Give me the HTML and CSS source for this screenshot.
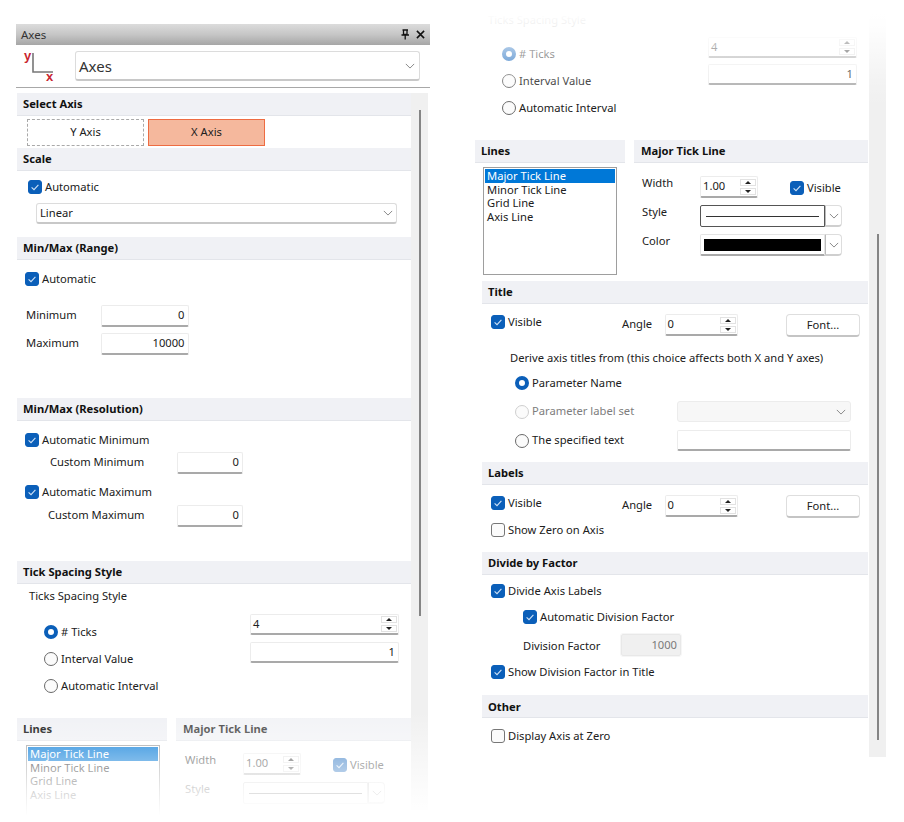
FILE: index.html
```html
<!DOCTYPE html>
<html lang="en">
<head>
<meta charset="utf-8">
<title>Axes</title>
<link rel="stylesheet" href="styles.css">
</head>
<body>
<svg class="defs" aria-hidden="true">
  <symbol id="tick" viewBox="0 0 14 14"><path d="M3.6 7.3 6 9.6 10.4 4.8" fill="none" stroke="#cfe2f7" stroke-width="1.1"/></symbol>
  <symbol id="chev" viewBox="0 0 12 7"><path d="M1 1 6 6 11 1" fill="none" stroke="#8a8a8a" stroke-width="1.2"/></symbol>
</svg>
<main class="page">
  <section class="panel panel-left">
    <header class="titlebar">
      <span>Axes</span>
      <span class="title-icons">
        <svg class="pin" viewBox="0 0 10 11"><path d="M2.5 1H8M3.5 1V5.5H7V1M1.5 6H9M5.2 6V10.5" fill="none" stroke="#111" stroke-width="1.3"/></svg>
        <svg class="close" viewBox="0 0 10 10"><path d="M1 1 9 9M9 1 1 9" fill="none" stroke="#111" stroke-width="1.7"/></svg>
      </span>
    </header>
    <div class="pickrow">
      <svg class="axes-icon" viewBox="0 -6 36 42">
        <path d="M10 2V21H30" fill="none" stroke="#777" stroke-width="1.6"/>
        <text class="axes-letter" x="1" y="9">y</text>
        <text class="axes-letter" x="23" y="30">x</text>
      </svg>
      <div class="combo combo-main"><span>Axes</span><svg class="chev"><use href="#chev"/></svg></div>
    </div>
    <div class="scrollarea">
      <div class="content">
        <h2 class="head">Select Axis</h2>
        <div class="axis-row">
          <div class="axis-btn axis-y">Y Axis</div>
          <div class="axis-btn axis-x">X Axis</div>
        </div>
        <h2 class="head mt2">Scale</h2>
        <label class="check-row mt9 in11"><span class="check on"><svg><use href="#tick"/></svg></span>Automatic</label>
        <div class="combo combo-linear"><span>Linear</span><svg class="chev"><use href="#chev"/></svg></div>

        <h2 class="head mt13">Min/Max (Range)</h2>
        <label class="check-row mt12 in8"><span class="check on"><svg><use href="#tick"/></svg></span>Automatic</label>
        <div class="field-row mt19"><span class="lbl lbl-range">Minimum</span><div class="field num w88">0</div></div>
        <div class="field-row mt6"><span class="lbl lbl-range">Maximum</span><div class="field num w88">10000</div></div>

        <h2 class="head mt43">Min/Max (Resolution)</h2>
        <label class="check-row mt12 in8"><span class="check on"><svg><use href="#tick"/></svg></span>Automatic Minimum</label>
        <div class="field-row mt5"><span class="lbl lbl-cmin">Custom Minimum</span><div class="field num w66">0</div></div>
        <label class="check-row mt11 in8"><span class="check on"><svg><use href="#tick"/></svg></span>Automatic Maximum</label>
        <div class="field-row mt6"><span class="lbl lbl-cmax">Custom Maximum</span><div class="field num w66">0</div></div>

        <h2 class="head mt34">Tick Spacing Style</h2>
        <div class="plain-row mt3 in12">Ticks Spacing Style</div>
        <div class="tick-body mt9">
          <div class="radios top11">
            <label class="radio-row"><span class="radio on"></span># Ticks</label>
            <label class="radio-row"><span class="radio"></span>Interval Value</label>
            <label class="radio-row"><span class="radio"></span>Automatic Interval</label>
          </div>
          <div class="tick-fields">
            <div class="field spin w-tick"><span>4</span><span class="spin-btns"><i class="up"></i><i class="down"></i></span></div>
            <div class="field num w-tick mt7">1</div>
          </div>
        </div>

        <div class="split mt25">
          <div class="split-left">
            <h2 class="head">Lines</h2>
            <ul class="listbox lb-left">
              <li class="sel">Major Tick Line</li><li>Minor Tick Line</li><li>Grid Line</li><li>Axis Line</li>
            </ul>
          </div>
          <div class="split-right-l dim">
            <h2 class="head">Major Tick Line</h2>
            <div class="form-row mt12 in9">
              <span class="lbl-form">Width</span>
              <div class="field spin w-width"><span>1.00</span><span class="spin-btns"><i class="up"></i><i class="down"></i></span></div>
              <label class="check-row vis"><span class="check on"><svg><use href="#tick"/></svg></span>Visible</label>
            </div>
            <div class="form-row mt7 in9">
              <span class="lbl-form">Style</span>
              <div class="swatch-combo pale"><span class="swatch-box"><i class="line"></i></span><span class="swatch-arrow"><svg class="chev"><use href="#chev"/></svg></span></div>
            </div>
          </div>
        </div>
      </div>
      <div class="track track-left"><div class="thumb thumb-left"></div></div>
    </div>
  </section>

  <section class="panel panel-right">
    <div class="content">
      <div class="plain-row in13">Ticks Spacing Style</div>
      <div class="tick-body mt8">
        <div class="radios top10">
          <label class="radio-row"><span class="radio on"></span># Ticks</label>
          <label class="radio-row"><span class="radio"></span>Interval Value</label>
          <label class="radio-row"><span class="radio"></span>Automatic Interval</label>
        </div>
        <div class="tick-fields">
          <div class="field spin w-tick"><span>4</span><span class="spin-btns"><i class="up"></i><i class="down"></i></span></div>
          <div class="field num w-tick mt6">1</div>
        </div>
      </div>

      <div class="split mt25">
        <div class="split-left">
          <h2 class="head">Lines</h2>
          <ul class="listbox lb-right">
            <li class="sel">Major Tick Line</li><li>Minor Tick Line</li><li>Grid Line</li><li>Axis Line</li>
          </ul>
        </div>
        <div class="split-right-r">
          <h2 class="head">Major Tick Line</h2>
          <div class="form-row mt13 in8">
            <span class="lbl-form">Width</span>
            <div class="field spin w-width"><span>1.00</span><span class="spin-btns"><i class="up"></i><i class="down"></i></span></div>
            <label class="check-row vis"><span class="check on"><svg><use href="#tick"/></svg></span>Visible</label>
          </div>
          <div class="form-row mt7 in8">
            <span class="lbl-form">Style</span>
            <div class="swatch-combo"><span class="swatch-box active"><i class="line"></i></span><span class="swatch-arrow"><svg class="chev"><use href="#chev"/></svg></span></div>
          </div>
          <div class="form-row mt7 in8">
            <span class="lbl-form">Color</span>
            <div class="swatch-combo"><span class="swatch-box"><i class="black"></i></span><span class="swatch-arrow"><svg class="chev"><use href="#chev"/></svg></span></div>
          </div>
        </div>
      </div>

      <div class="indented">
        <h2 class="head mt6">Title</h2>
        <div class="angle-row mt9">
          <label class="check-row vis-col"><span class="check on"><svg><use href="#tick"/></svg></span>Visible</label>
          <span class="lbl-angle">Angle</span>
          <div class="field spin w-angle"><span>0</span><span class="spin-btns"><i class="up"></i><i class="down"></i></span></div>
          <button class="font-btn">Font...</button>
        </div>
        <div class="plain-row mt12 in28">Derive axis titles from (this choice affects both X and Y axes)</div>
        <label class="radio-row mt9 in33"><span class="radio on"></span>Parameter Name</label>
        <div class="title-src mt11">
          <label class="radio-row src-col off"><span class="radio off"></span>Parameter label set</label>
          <div class="combo combo-off"><svg class="chev"><use href="#chev"/></svg></div>
        </div>
        <div class="title-src mt8">
          <label class="radio-row src-col"><span class="radio"></span>The specified text</label>
          <div class="field w174"></div>
        </div>

        <h2 class="head mt11">Labels</h2>
        <div class="angle-row mt9">
          <label class="check-row vis-col"><span class="check on"><svg><use href="#tick"/></svg></span>Visible</label>
          <span class="lbl-angle">Angle</span>
          <div class="field spin w-angle"><span>0</span><span class="spin-btns"><i class="up"></i><i class="down"></i></span></div>
          <button class="font-btn">Font...</button>
        </div>
        <label class="check-row mt5 in9"><span class="check"></span>Show Zero on Axis</label>

        <h2 class="head mt15">Divide by Factor</h2>
        <label class="check-row mt9 in9"><span class="check on"><svg><use href="#tick"/></svg></span>Divide Axis Labels</label>
        <label class="check-row mt12 in41"><span class="check on"><svg><use href="#tick"/></svg></span>Automatic Division Factor</label>
        <div class="field-row mt10"><span class="lbl lbl-div">Division Factor</span><div class="field num readonly">1000</div></div>
        <label class="check-row mt9 in9"><span class="check on"><svg><use href="#tick"/></svg></span>Show Division Factor in Title</label>

        <h2 class="head mt16 head-other">Other</h2>
        <label class="check-row mt11 in9"><span class="check"></span>Display Axis at Zero</label>
      </div>
    </div>
    <div class="track track-right"><div class="thumb thumb-right"></div></div>
  </section>

  <div class="fade fade-left"></div>
  <div class="fade fade-right"></div>
</main>
</body>
</html>
```

FILE: styles.css
```css
* { box-sizing: border-box; }
html, body { margin: 0; padding: 0; height: 822px; overflow: hidden; background: #fff; }
body { font-family: "Noto Sans", "Open Sans", sans-serif; font-size: 11.2px; color: #202020; }
.defs { display: none; }
.page { position: relative; display: flex; align-items: flex-start; height: 822px; padding-left: 16px; }

/* Panels */
.panel-left { width: 414px; height: 822px; margin-top: 24px; overflow: hidden; }
.panel-right { display: flex; margin-top: 11px; margin-left: 45px; }
.titlebar { display: flex; align-items: center; justify-content: space-between; height: 21px; padding: 0 5px 0 5px;
  background: linear-gradient(#dcdcdc, #c6c6c6 50%, #a6a6a6); font-size: 11.5px; color: #333; }
.title-icons { display: flex; align-items: center; gap: 6px; }
.pin { width: 10px; height: 11px; }
.close { width: 9px; height: 9px; }
.pickrow { display: flex; align-items: flex-start; height: 43px; border-bottom: 1px solid #a8a8a8; padding: 0 0 0 7px; }
.axes-icon { width: 36px; height: 42px; flex: none; }
.axes-letter { font-family: "Liberation Sans", sans-serif; font-weight: 700; font-size: 13px; fill: #c9252f; }
.scrollarea { display: flex; margin-top: 5px; padding-left: 1px; height: 717px; }
.content { width: 395px; flex: none; }
.panel-right .content { width: 394px; }
.track { width: 17px; flex: none; background: #f0f0f0; }
.track-left { margin-left: -1px; height: 717px; padding: 17px 0 0 8px; }
.track-right { height: 746px; padding: 223px 0 0 8px; }
.thumb { width: 2px; background: #858585; }
.thumb-left { height: 506px; }
.thumb-right { height: 506px; }

/* Section headers */
.head { margin: 0; height: 23px; display: flex; align-items: center; padding: 0 0 2px 6px; background: #f0f1f5;
  border-bottom: 1px solid #e3e5ea; font-size: 11.2px; font-weight: 700; color: #111; }
.head-other { padding-bottom: 0; }
.panel-left .content > .head, .panel-left .split { width: 394px; }
.panel-right .indented { margin-left: 7px; width: 386px; }
.split-right-l .head, .split-right-r .head { padding-left: 7px; }

/* Spacing helpers */
.mt2 { margin-top: 2px; } .mt3 { margin-top: 3px; } .mt5 { margin-top: 5px; } .mt6 { margin-top: 6px; }
.mt7 { margin-top: 7px; } .mt8 { margin-top: 8px; } .mt9 { margin-top: 9px; } .mt10 { margin-top: 10px; }
.mt11 { margin-top: 11px; } .mt12 { margin-top: 12px; } .mt13 { margin-top: 13px; } .mt15 { margin-top: 15px; }
.mt16 { margin-top: 16px; } .mt19 { margin-top: 19px; } .mt25 { margin-top: 25px; } .mt34 { margin-top: 34px; }
.mt43 { margin-top: 43px; }
.in8 { padding-left: 8px; } .in9 { padding-left: 9px; } .in11 { padding-left: 11px; } .in12 { padding-left: 12px; }
.in13 { padding-left: 13px; } .in28 { padding-left: 28px; } .in33 { padding-left: 33px; } .in41 { padding-left: 41px; }
.top10 { padding-top: 10px; } .top11 { padding-top: 11px; }

/* Axis buttons */
.axis-row { display: flex; gap: 4px; margin-top: 3px; padding-left: 10px; }
.axis-btn { width: 117px; height: 27px; display: flex; align-items: center; justify-content: center; padding-bottom: 2px; }
.axis-y { border: 1px dashed #a9a9a9; }
.axis-x { background: #f5b89d; border: 1px solid #ee6c42; }

/* Controls: the box keeps its place while the text sits a pixel higher */
.check-row, .radio-row { display: flex; align-items: center; height: 14px; padding-bottom: 2px; white-space: nowrap; }
.check { width: 14px; height: 14px; flex: none; margin: 2px 3px 0 0; border: 1px solid #777; border-radius: 3px; background: #fbfbfb; }
.check svg { display: block; width: 14px; height: 14px; margin: -1px; }
.check.on { background: #0b5fb9; border-color: #0b5fb9; }
.radio { width: 14px; height: 14px; flex: none; margin: 2px 3px 0 0; border: 1px solid #6a6a6a; border-radius: 50%; background: #fbfbfb; }
.radio.on { border: 4px solid #0b5fb9; background: #fff; }
.radio.off { border-color: #cfcfcf; }
.radio-row.off { color: #7d7d7d; }
.radios { display: flex; flex-direction: column; gap: 13px; padding-left: 27px; }
.plain-row { height: 18px; display: flex; align-items: center; padding-bottom: 2px; white-space: nowrap; }
.field-row { display: flex; align-items: center; height: 22px; }
.lbl { display: block; flex: none; padding-bottom: 3px; white-space: nowrap; }
.lbl-range { width: 83.500px; padding-left: 9px; }
.lbl-cmin { width: 160px; padding-left: 33px; }
.lbl-cmax { width: 160px; padding-left: 31px; }
.lbl-div { width: 139px; padding: 0 0 0 41px; }

.field { height: 22px; background: #fff; border: 1px solid #ececec; border-bottom: 2px solid #a9a9a9; border-radius: 2px; flex: none;
  display: flex; align-items: center; padding: 0 3px 2px 3px; }
.num { justify-content: flex-end; }
.w88 { width: 88px; } .w66 { width: 66px; } .w174 { width: 174px; height: 21px; }
.w-tick { width: 149px; height: 21px; }
.w-width { width: 58px; } .w-angle { width: 73px; }
.readonly { width: 60px; background: #f0f0f0; border: 1px solid #e8e8e8; outline: 1px solid #f6f6f6; color: #7a7a7a; }
.spin { justify-content: space-between; padding: 0 1px 2px 2px; }
.spin-btns { display: flex; flex-direction: column; gap: 2px; margin-top: 2px; }
.spin-btns i { display: flex; align-items: center; justify-content: center; width: 16px; height: 7px; background: #fff; border: 1px solid #e2e2e2; }
.up::after { content: ""; border: 3px solid transparent; border-top: 0; border-bottom: 3px solid #222; }
.down::after { content: ""; border: 3px solid transparent; border-bottom: 0; border-top: 3px solid #222; }

.combo { display: flex; align-items: center; justify-content: space-between; background: #fff; border: 1px solid #dcdcdc; border-bottom: 2px solid #c8c8c8; border-radius: 3px; }
.chev { width: 10px; height: 6px; flex: none; }
.combo-main { width: 345px; height: 30px; margin: 6px 0 0 16px; padding: 0 4px 0 3px; font-size: 15px; color: #333; }
.combo-linear { width: 361px; height: 21px; margin: 9px 0 0 19px; padding: 0 3px 2px 3px; }
.combo-linear .chev, .combo-off .chev { margin-top: 2px; }
.combo-off { width: 174px; height: 21px; background: #f7f7f7; border: 1px solid #ececec; justify-content: flex-end; padding: 0 4px 2px 0; }

.tick-body { display: flex; justify-content: space-between; padding-right: 12px; }
.tick-fields { display: flex; flex-direction: column; }
.panel-left .tick-body { width: 394px; }

/* Lines */
.split { display: flex; gap: 9px; }
.split-left { width: 150px; flex: none; }
.split-right-l { width: 235px; flex: none; }
.split-right-r { width: 234px; flex: none; }
.dim { opacity: .8; }
.listbox { list-style: none; margin: 4px 0 0 8px; padding: 1px; width: 134px; height: 108px; border: 1px solid #9e9e9e; line-height: 13.500px; }
.lb-left { margin-left: 9px; }
.listbox li { padding-left: 2px; white-space: nowrap; }
.listbox .sel { background: #0078d7; color: #fff; }
.form-row { display: flex; align-items: flex-start; height: 22px; }
.lbl-form { width: 58px; flex: none; line-height: 14px; }
.vis { margin: 5px 0 0 32px; height: 14px; }
.swatch-combo { display: flex; width: 142px; height: 22px; flex: none; }
.swatch-box { display: flex; align-items: center; justify-content: center; width: 125px; height: 22px; background: #fff; border: 1px solid #e4e4e4; border-bottom: 2px solid #a9a9a9; border-radius: 2px 0 0 2px; }
.swatch-box.active { border: 1px solid #555; }
.swatch-arrow { display: flex; align-items: center; justify-content: center; width: 17px; background: #fff; border: 1px solid #ddd; border-left-color: #bbb; border-bottom: 2px solid #cfcfcf; border-radius: 0 4px 4px 0; }
.line { display: block; width: 113px; height: 1px; background: #333; }
.black { display: block; width: 117px; height: 12px; background: #000; }
.pale .swatch-box { border: 1px solid #ccc; }

/* Title section */
.angle-row { display: flex; align-items: center; height: 24px; }
.vis-col { width: 140px; padding: 0 0 8px 9px; height: 22px; flex: none; }
.lbl-angle { width: 42.500px; flex: none; padding-bottom: 3px; }
.font-btn { width: 74px; height: 23px; margin-left: 48.500px; padding: 0; background: #fff; border: 1px solid #dedede; border-bottom: 2px solid #c4c4c4; border-radius: 4px;
  font: inherit; color: inherit; }
.title-src { display: flex; align-items: center; height: 21px; }
.src-col { width: 195px; padding-left: 33px; flex: none; }

/* Soft edges of the two cut-outs */
.fade { position: absolute; pointer-events: none; }
.fade-left { left: 0; top: 712px; width: 440px; height: 110px;
  background: linear-gradient(rgba(255,255,255,0), rgba(255,255,255,.5) 45%, rgba(255,255,255,.8) 72%, #fff 94%); }
.fade-right { left: 465px; top: 0; width: 439px; height: 110px;
  background: linear-gradient(#fff 12%, rgba(255,255,255,.92) 24%, rgba(255,255,255,.55) 50%, rgba(255,255,255,.2) 74%, rgba(255,255,255,0) 96%); }
```
